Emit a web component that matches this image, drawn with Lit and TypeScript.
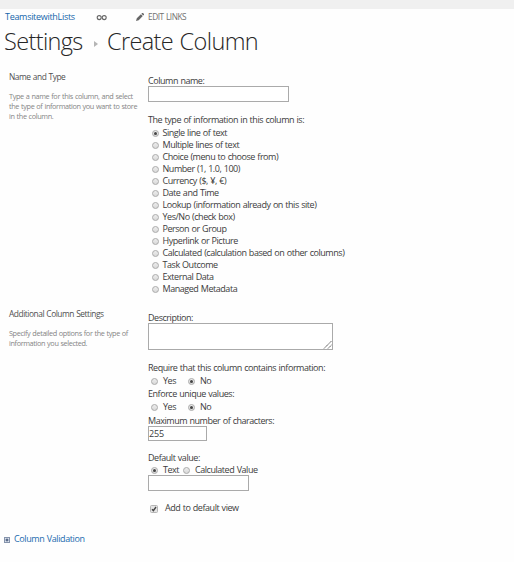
import { LitElement, html, css } from "lit";
import { customElement, property } from "lit/decorators.js";

@customElement("radio-option")
class RadioOption extends LitElement {
  @property({ type: Boolean }) checked = false;
  @property() label = "";
  static styles = css`
    :host { display: flex; align-items: center; height: 12px; white-space: nowrap; }
    .dot { box-sizing: border-box; width: 7px; height: 7px; flex: none; margin-top: 1px; border: 1px solid #aaa; border-radius: 50%;
      background: linear-gradient(#ededed, #d9d9d9); display: grid; place-items: center; }
    .dot i { width: 3px; height: 3px; border-radius: 50%; background: #444; }
    .label { margin-left: var(--gap, 3px); }
  `;
  render() {
    return html`<span class="dot">${this.checked ? html`<i></i>` : ""}</span><span class="label">${this.label}</span>`;
  }
}

@customElement("app-root")
class AppRoot extends LitElement {
  types = [
    "Single line of text", "Multiple lines of text", "Choice (menu to choose from)", "Number (1, 1.0, 100)",
    "Currency ($, ¥, €)", "Date and Time", "Lookup (information already on this site)", "Yes/No (check box)",
    "Person or Group", "Hyperlink or Picture", "Calculated (calculation based on other columns)", "Task Outcome",
    "External Data", "Managed Metadata",
  ];
  static styles = css`
    :host { display: block; box-sizing: border-box; width: 514px; height: 562px; overflow: hidden; background: #fefefe;
      font: 9px/12px "Open Sans", "Noto Sans", sans-serif; letter-spacing: -0.455px; word-spacing: 0.5px; color: #3c3c3c; }
    .top { height: 9px; background: #f0f0f0; }
    .links { display: flex; align-items: center; height: 16px; padding-left: 5px; white-space: nowrap; }
    .site { width: 91px; color: #1566ab; font-size: 9px; letter-spacing: -0.3px; }
    .rings { width: 40px; height: 7px; }
    .pencil { width: 8px; height: 8px; margin-right: 4px; }
    .edit { color: #707070; font-size: 8.3px; letter-spacing: -0.45px; }
    h1 { display: flex; align-items: center; height: 32px; margin: 0; padding-left: 4px; white-space: nowrap; word-spacing: 1px;
      font-size: 23.5px; line-height: 32px; font-weight: 300; color: #262626; }
    .t1 { width: 79px; letter-spacing: -0.64px; }
    .t2 { letter-spacing: -0.62px; }
    .arrow { width: 4px; height: 6px; margin: 6px 9px 0 11px; }
    .section { display: grid; grid-template-columns: 148px 1fr; }
    .first { height: 237px; padding-top: 18px; }
    .second { height: 221px; }
    .side { padding-left: 9px; white-space: nowrap; margin-top: -4px; }
    .heading { height: 20px; color: #505050; font-size: 8.4px; letter-spacing: -0.46px; }
    .help { color: #858585; font-size: 7.3px; line-height: 10px; letter-spacing: -0.38px; }
    .line { height: 12px; white-space: nowrap; }
    .box { box-sizing: border-box; border: 1px solid #aaa; background: #fff; height: 16px; line-height: 14px; }
    .name { width: 141px; height: 16px; margin: -1px 0 12px; }
    .list { padding: 1px 0 0 4px; }
    .list radio-option { --gap: 3.5px; }
    .area { width: 185px; height: 27px; margin: -1px 0 12px; display: flex; justify-content: flex-end; align-items: flex-end; }
    .area svg { width: 9px; height: 9px; }
    .pair { display: flex; height: 13px; align-items: flex-start; padding-left: 3px; --gap: 5px; }
    .pair radio-option:first-child { width: 37px; }
    .max { width: 59px; height: 15px; margin: -1px 0 11px; line-height: 13px; letter-spacing: -0.2px; }
    .req { height: 13px; }
    .gap { margin-top: 1px; }
    .default { padding-left: 3px; display: flex; --gap: 5px; }
    .default radio-option:first-child { width: 32px; }
    .value { width: 101px; height: 16px; margin: -1px 0 11px; }
    .check { display: flex; align-items: center; height: 12px; padding-left: 2px; }
    .check svg { width: 8px; height: 8px; margin: 2px 7px 0 0; }
    .validation { display: flex; align-items: center; height: 12px; padding-left: 4px; color: #1b6bae; letter-spacing: -0.4px; }
    .validation svg { width: 6px; height: 6px; margin: 2px 4px 0 0; }
  `;
  render() {
    return html`
      <div class="top"></div>
      <div class="links">
        <span class="site">TeamsitewithLists</span>
        <svg class="rings" viewBox="0 0 40 7"><g fill="none" stroke="#666" stroke-width="1.1"><circle cx="3.2" cy="3.6" r="2"/><circle cx="8.2" cy="3.6" r="2"/></g></svg>
        <svg class="pencil" viewBox="0 0 8 8"><path d="M0 8 .8 5.3 4.9 1.2 6.8 3.1 2.7 7.2ZM5.4.7 6.1 0H7l1 1v.8l-.7.7Z" fill="#666"/></svg>
        <span class="edit">EDIT LINKS</span>
      </div>
      <h1><span class="t1">Settings</span><svg class="arrow" viewBox="0 0 4 6"><path d="M0 0 4 3 0 6Z" fill="#b5b5b5"/></svg><span class="t2">Create Column</span></h1>
      <div class="section first">
        <div class="side">
          <div class="heading">Name and Type</div>
          <div class="help">Type a name for this column, and select<br>the type of information you want to store<br>in the column.</div>
        </div>
        <div class="main">
          <div class="line">Column name:</div>
          <div class="box name"></div>
          <div class="line">The type of information in this column is:</div>
          <div class="list">${this.types.map((t, i) => html`<radio-option .label=${t} .checked=${i === 0}></radio-option>`)}</div>
        </div>
      </div>
      <div class="section second">
        <div class="side">
          <div class="heading">Additional Column Settings</div>
          <div class="help">Specify detailed options for the type of<br>information you selected.</div>
        </div>
        <div class="main">
          <div class="line">Description:</div>
          <div class="box area"><svg viewBox="0 0 9 9"><path d="M1 8.5 8.5 1M5 8.5 8.5 5" stroke="#444" stroke-width=".9" stroke-dasharray="1.4 .4"/></svg></div>
          <div class="line req">Require that this column contains information:</div>
          <div class="pair"><radio-option label="Yes"></radio-option><radio-option label="No" checked></radio-option></div>
          <div class="line req">Enforce unique values:</div>
          <div class="pair"><radio-option label="Yes"></radio-option><radio-option label="No" checked></radio-option></div>
          <div class="line gap">Maximum number of characters:</div>
          <div class="box max">255</div>
          <div class="line">Default value:</div>
          <div class="default"><radio-option label="Text" checked></radio-option><radio-option label="Calculated Value"></radio-option></div>
          <div class="box value"></div>
          <div class="check"><svg viewBox="0 0 8 8"><rect x=".5" y=".5" width="7" height="7" rx="1" fill="#e4e4e4" stroke="#b5b5b5"/><path d="M2 4.2 3.4 5.6 6 2" fill="none" stroke="#444" stroke-width="1.4"/></svg><span>Add to default view</span></div>
        </div>
      </div>
      <div class="validation"><svg viewBox="0 0 6 6"><rect x=".5" y=".5" width="5" height="5" fill="#dce3ee" stroke="#8593ab"/><path d="M1.5 3h3M3 1.5v3" stroke="#30456b"/></svg><span>Column Validation</span></div>
    `;
  }
}
